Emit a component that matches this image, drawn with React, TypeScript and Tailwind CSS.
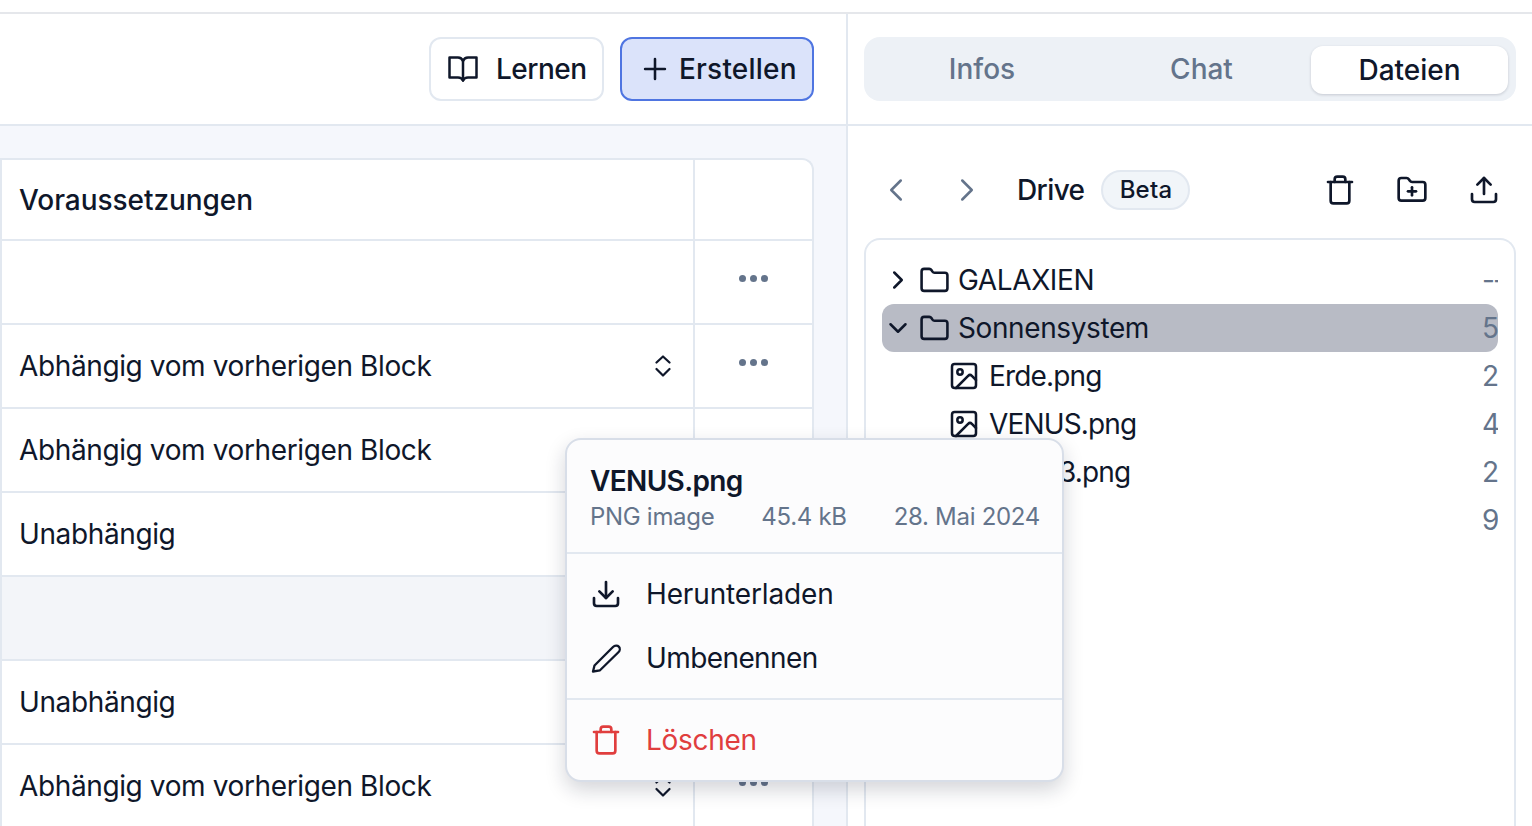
import { ChevronDown, ChevronLeft, ChevronRight, Folder, FolderPlus, Image, Plus, Trash, Upload, Download } from "lucide-react";

const font = "font-['Inter',sans-serif]";

function Dots() {
  return (
    <div className="flex gap-[4px]">
      <span className="h-[7px] w-[7px] rounded-full bg-[#64748b]" />
      <span className="h-[7px] w-[7px] rounded-full bg-[#64748b]" />
      <span className="h-[7px] w-[7px] rounded-full bg-[#64748b]" />
    </div>
  );
}

function UpDown() {
  return (
    <svg width="16" height="24" viewBox="0 0 16 24" fill="none" stroke="#0f172a" strokeWidth="2.2" strokeLinecap="round" strokeLinejoin="round">
      <path d="M1.500 8.500L8 2.500l6.500 6" />
      <path d="M1.500 15L8 21.500l6.500-6.500" />
    </svg>
  );
}

function BookIcon() {
  return (
    <svg width="32" height="32" viewBox="0 0 32 32" fill="none" stroke="#0f172a" strokeWidth="2.500" strokeLinejoin="round" strokeLinecap="round">
      <path d="M16 8c-1-2.500-2.500-3.500-5-3.500H2.500V24.500H11c2.500 0 4 .8 5 3 1-2.200 2.500-3 5-3h8.500V4.500H21c-2.500 0-4 1-5 3.500z" />
      <path d="M16 8v19.500" />
    </svg>
  );
}

function PencilIcon() {
  return (
    <svg width="32" height="32" viewBox="0 0 32 32" fill="none" stroke="currentColor" strokeWidth="2.300" strokeLinejoin="round" strokeLinecap="round">
      <path d="M3 29.500L4.500 23.500 23 5c1.800-1.800 4.500-1.800 5.800-.4 1.400 1.400 1.300 4-.4 5.700L10 28.300z" />
    </svg>
  );
}

function Row({ label, select, dots = true }: { label?: string; select?: boolean; dots?: boolean }) {
  return (
    <div className="flex h-[84px] shrink-0 border-b-2 border-[#e2e8f0] bg-white">
      <div className="flex w-[693px] items-center justify-between border-r-2 border-[#e2e8f0] pr-[22px] pl-[17px]">
        <span className="text-[28px] tracking-[-0.38px] text-[#0f172a]">{label}</span>
        {select && <UpDown />}
      </div>
      {dots && (
        <div className="flex flex-1 items-center justify-center pb-[8px]">
          <Dots />
        </div>
      )}
    </div>
  );
}

function TreeRow({
  name,
  size,
  kind,
  open,
  selected,
}: {
  name: string;
  size: string;
  kind: "folder" | "file";
  open?: boolean;
  selected?: boolean;
}) {
  return (
    <div className={`flex h-[48px] items-center overflow-hidden rounded-[12px] ${selected ? "bg-[#b8bbc5]" : ""}`}>
      {kind === "folder" ? (
        <>
          <div className="flex w-[32px] justify-center">
            {open ? (
              <ChevronDown size={30} strokeWidth={2} className="text-[#0f172a]" />
            ) : (
              <ChevronRight size={30} strokeWidth={2} className="text-[#0f172a]" />
            )}
          </div>
          <Folder size={31} strokeWidth={2} className="ml-[5px] text-[#0f172a]" />
          <span className="ml-[8px] text-[28px] tracking-[-0.4px] text-[#0f172a]">{name}</span>
        </>
      ) : (
        <>
          <Image size={32} strokeWidth={1.9} className="ml-[66px] text-[#0f172a]" />
          <span className="ml-[9px] text-[28px] tracking-[-0.85px] text-[#0f172a]">{name}</span>
        </>
      )}
      <span className="ml-auto w-[16px] overflow-hidden text-[28px] tracking-[-2px] whitespace-nowrap text-[#64748b]">{size}</span>
    </div>
  );
}

export default function App() {
  return (
    <div className={`relative h-[826px] w-[1532px] overflow-hidden bg-white ${font}`}>
      <div className="h-[14px] border-b-2 border-[#e5e7eb]" />
      <div className="flex h-[812px]">
        {/* linke Spalte */}
        <div className="flex w-[848px] flex-col border-r-2 border-[#e2e8f0]">
          <div className="flex h-[112px] shrink-0 items-center justify-end gap-[16px] border-b-2 border-[#e2e8f0] pr-[32px]">
            <button className="flex h-[64px] w-[175px] items-center gap-[17px] rounded-[12px] border-2 border-[#e2e8f0] bg-white pl-[16px] text-[28px] font-medium tracking-[-0.5px] text-[#0f172a]">
              <BookIcon />
              Lernen
            </button>
            <button className="flex h-[64px] w-[194px] items-center gap-[7px] rounded-[12px] border-2 border-[#4f75e1] bg-[#dbe3fa] pl-[16px] text-[28px] font-medium tracking-[0.2px] text-[#0f172a]">
              <Plus size={34} strokeWidth={1.800} />
              Erstellen
            </button>
          </div>
          <div className="flex-1 overflow-hidden bg-[#f5f7fc] pt-[32px] pr-[32px]">
            <div className="flex flex-col overflow-hidden rounded-tr-[12px] border-t-2 border-r-2 border-l-2 border-[#e2e8f0]">
              <div className="flex h-[81px] shrink-0 border-b-2 border-[#e2e8f0] bg-white">
                <div className="flex w-[693px] items-center border-r-2 border-[#e2e8f0] pt-[1px] pl-[17px]">
                  <span className="text-[28px] font-medium tracking-[-0.05px] text-[#0f172a]">Voraussetzungen</span>
                </div>
              </div>
              <Row />
              <Row label="Abhängig vom vorherigen Block" select />
              <Row label="Abhängig vom vorherigen Block" select />
              <Row label="Unabhängig" select />
              <div className="h-[84px] shrink-0 border-b-2 border-[#e2e8f0] bg-[#f3f5f9]" />
              <Row label="Unabhängig" select />
              <Row label="Abhängig vom vorherigen Block" select />
            </div>
          </div>
        </div>

        {/* rechte Spalte */}
        <div className="flex flex-1 flex-col">
          <div className="flex h-[112px] shrink-0 items-center border-b-2 border-[#e2e8f0] px-[16px]">
            <div className="flex h-[64px] w-full items-center rounded-[16px] bg-[#edf1f6] pl-[8px] text-[28px] font-medium">
              <div className="w-[220px] text-center text-[#64748b]">Infos</div>
              <div className="w-[219px] text-center text-[#64748b]">Chat</div>
              <div className="mt-[2px] flex h-[48px] w-[197px] items-center justify-center rounded-[12px] bg-white text-[#0f172a] shadow-[0_1px_3px_rgba(15,23,42,0.18)]">
                Dateien
              </div>
            </div>
          </div>
          <div className="flex h-[112px] shrink-0 items-center pt-[16px] pr-[32px] pl-[29px]">
            <ChevronLeft size={38} strokeWidth={1.6} className="text-[#64748b]" />
            <ChevronRight size={38} strokeWidth={1.6} className="ml-[33px] text-[#64748b]" />
            <span className="ml-[31px] text-[28px] font-medium tracking-[-0.6px] text-[#0f172a]">Drive</span>
            <span className="ml-[17px] flex h-[40px] w-[89px] items-center justify-center rounded-full border-2 border-[#e2e8f0] bg-[#f1f5f9] text-[24px] font-medium tracking-[0.2px] text-[#0f172a]">
              Beta
            </span>
            <Trash size={32} strokeWidth={2} className="ml-auto text-[#0f172a]" />
            <FolderPlus size={32} strokeWidth={2} className="ml-[40px] text-[#0f172a]" />
            <Upload size={32} strokeWidth={2} className="ml-[40px] text-[#0f172a]" />
          </div>
          <div className="mr-[16px] ml-[16px] flex-1 rounded-t-[16px] border-2 border-b-0 border-[#e2e8f0] px-[16px] pt-[16px]">
            <TreeRow kind="folder" name="GALAXIEN" size="--" />
            <TreeRow kind="folder" name="Sonnensystem" size="5" open selected />
            <TreeRow kind="file" name="Erde.png" size="2" />
            <TreeRow kind="file" name="VENUS.png" size="4" />
            <TreeRow kind="file" name="Mars 3.png" size="2" />
            <TreeRow kind="file" name="" size="9" />
          </div>
        </div>
      </div>

      {/* Kontextmenü */}
      <div className="absolute top-[438px] left-[565px] w-[499px] rounded-[16px] border-2 border-[#d8dee8] bg-[#fcfcfd] shadow-[0_8px_20px_rgba(15,23,42,0.18)]">
        <div className="flex h-[114px] flex-col border-b-2 border-[#e2e8f0] pt-[23px] pr-[22px] pl-[23px]">
          <span className="text-[28px] leading-[36px] font-semibold tracking-[-0.65px] text-[#0f172a]">VENUS.png</span>
          <div className="mt-[2px] flex justify-between text-[24px] leading-[32px] tracking-[-0.3px] text-[#64748b]">
            <span>PNG image</span>
            <span>45.4 kB</span>
            <span>28. Mai 2024</span>
          </div>
        </div>
        <div className="flex h-[146px] flex-col justify-center border-b-2 border-[#e2e8f0]">
          <div className="flex h-[64px] items-center pl-[23px] text-[28px] text-[#0f172a]">
            <Download size={32} strokeWidth={2} />
            <span className="ml-[24px] tracking-[-0.15px]">Herunterladen</span>
          </div>
          <div className="flex h-[64px] items-center pl-[23px] text-[28px] text-[#0f172a]">
            <PencilIcon />
            <span className="ml-[24px] tracking-[-0.6px]">Umbenennen</span>
          </div>
        </div>
        <div className="flex h-[80px] items-center pl-[23px] text-[28px] text-[#e03e3e]">
          <Trash size={32} strokeWidth={2} />
          <span className="ml-[24px] tracking-[-0.3px]">Löschen</span>
        </div>
      </div>
    </div>
  );
}
